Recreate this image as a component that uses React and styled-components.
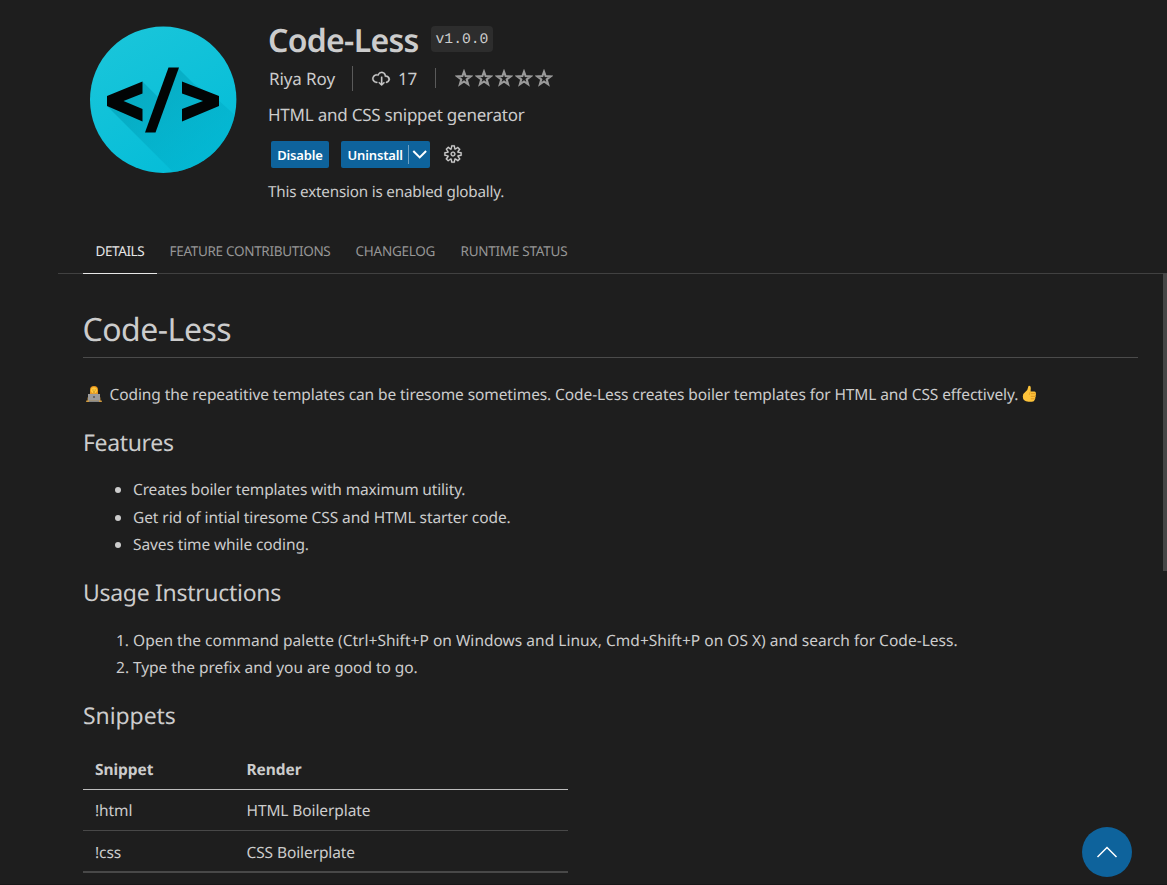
import React from "react";
import styled, { createGlobalStyle } from "styled-components";
import { VscCloudDownload, VscGear } from "react-icons/vsc";

const Global = createGlobalStyle`
  * { box-sizing: border-box; }
  body {
    margin: 0;
    background: #1e1e1e;
    color: #cccccc;
    font-family: "Noto Sans", "Open Sans", sans-serif;
    text-rendering: geometricPrecision;
    overflow: hidden;
  }
`;

const Page = styled.div`
  position: relative;
  height: 885px;
  overflow: hidden;
  white-space: nowrap;
  border-bottom: 1px solid #171717;
`;

const Header = styled.header`
  display: flex;
  gap: 31px;
  height: 229px;
  padding: 20px 0 0 90px;
`;

const Logo = styled.svg`
  display: block;
  width: 147px;
  height: 147px;
  margin-top: 6px;
`;

const Info = styled.div`
  display: flex;
  flex-direction: column;
`;

const TitleRow = styled.div`
  display: flex;
  align-items: center;
  gap: 12px;
  height: 40px;
`;

const Title = styled.h1`
  margin: 0;
  padding-top: 1px;
  width: 151px;
  font-size: 32px;
  line-height: 40px;
  font-weight: 600;
  letter-spacing: -0.7px;
`;

const Version = styled.code`
  height: 26px;
  width: 62px;
  margin-top: -2px;
  border-radius: 4px;
  background: #2d2d2d;
  font: 14.7px/29px "Liberation Mono", monospace;
  text-align: center;
`;

const Meta = styled.div`
  display: flex;
  align-items: center;
  height: 36px;
  font-size: 17px;
  letter-spacing: -0.2px;
`;

const Publisher = styled.span`
  width: 84px;
  padding-left: 1px;
  letter-spacing: -0.1px;
`;

const Separator = styled.i`
  width: 1px;
  height: ${(p) => p.$h}px;
  background: #5a5a5a;
`;

const Installs = styled.span`
  display: flex;
  align-items: center;
  gap: 7px;
  width: 82px;
  padding-left: 18px;

  svg { stroke: #cccccc; stroke-width: 0.25px; }
`;

const Stars = styled.span`
  display: flex;
  gap: 2px;
  padding-left: 19px;
`;

const Description = styled.div`
  font-size: 17px;
  line-height: 38px;
  letter-spacing: -0.23px;
`;

const Actions = styled.div`
  display: flex;
  align-items: center;
  height: 27px;
  margin: 7px 0 0 3px;
`;

const Button = styled.button`
  display: flex;
  align-items: center;
  justify-content: ${(p) => (p.$split ? "flex-start" : "center")};
  width: ${(p) => p.$w}px;
  height: 27px;
  margin-right: 12px;
  padding: 1px 0 0 ${(p) => (p.$split ? 6.5 : 0)}px;
  border: 0;
  border-radius: 2px;
  background: #0e639c;
  color: #fff;
  font: 600 13px/26px "Noto Sans", sans-serif;
  letter-spacing: -0.15px;
`;

const Divider = styled.i`
  width: 1px;
  height: 19px;
  margin: -1px 3px 0 auto;
  background: #6ea1c4;
`;

const Gear = styled(VscGear)`
  margin: -1px 0 0 1px;
  stroke: #cccccc;
  stroke-width: 0.15px;
`;

const Status = styled.div`
  margin-top: 11px;
  font-size: 15.2px;
  line-height: 26px;
  letter-spacing: -0.18px;
`;

const Tabs = styled.nav`
  display: flex;
  height: 45px;
  margin-left: 58px;
  padding-left: 25px;
  border-bottom: 1px solid #414141;
`;

const Tab = styled.a`
  height: 45px;
  width: ${(p) => p.$w}px;
  padding-left: 12.5px;
  border-bottom: 1px solid ${(p) => (p.$active ? "#e7e7e7" : "transparent")};
  color: ${(p) => (p.$active ? "#e7e7e7" : "#969696")};
  font-size: 13.5px;
  line-height: 44px;
  letter-spacing: ${(p) => p.$ls}px;
`;

const Readme = styled.main`
  padding: 30px 29px 0 83px;
  font-size: 15.5px;
`;

const Heading = styled.h1`
  margin: 0 0 22px -0.5px;
  padding-top: 1px;
  height: 54px;
  border-bottom: 1px solid #4b4b4b;
  font-size: 32px;
  font-weight: 400;
  line-height: 50px;
  letter-spacing: -0.5px;
`;

const Intro = styled.p`
  display: flex;
  align-items: center;
  margin: 0;
  height: 28px;
  letter-spacing: -0.095px;
`;

const Emoji = styled.svg`
  width: 18px;
  height: 18px;
  margin: ${(p) => p.$margin};
`;

const Section = styled.h2`
  margin: ${(p) => p.$top}px 0 ${(p) => p.$gap}px;
  font-size: 23px;
  font-weight: 400;
  line-height: 33px;
  letter-spacing: ${(p) => p.$ls}px;
`;

const List = styled.ul`
  margin: 0;
  padding-left: 50px;
  line-height: ${(p) => p.$lh}px;
`;

const Item = styled.li`
  letter-spacing: ${(p) => p.$ls}px;
`;

const Table = styled.table`
  width: 485px;
  border-collapse: collapse;
  border-bottom: 2px solid #484848;
`;

const Cell = styled.td`
  width: ${(p) => p.$w}px;
  height: ${(p) => (p.$last ? 42 : 41)}px;
  padding: ${(p) => (p.$last || p.$head ? 2 : 0)}px 12px 0;
  border-bottom: 1px solid ${(p) => (p.$head ? "#bdbdbd" : "#484848")};
  font-weight: ${(p) => (p.$head ? 700 : 400)};
  text-align: left;
  letter-spacing: ${(p) => (p.$head ? -0.05 : -0.1)}px;
`;

const ScrollThumb = styled.div`
  position: absolute;
  top: 273px;
  right: 0;
  width: 4px;
  height: 298px;
  background: #464646;
`;

const ToTop = styled.button`
  position: absolute;
  right: 35px;
  bottom: 7px;
  display: grid;
  place-items: center;
  width: 50px;
  height: 50px;
  padding: 0;
  border: 0;
  border-radius: 50%;
  background: #0e639c;
`;

const Star = () => (
  <svg width="18" height="18" viewBox="0 0 18 18">
    <path
      d="M9 2.7 L10.6 7.1 L15.6 7.4 L11.7 10.4 L13.1 15.3 L9 12.5 L4.9 15.3 L6.3 10.4 L2.4 7.4 L7.4 7.1 Z"
      fill="none"
      stroke="#999"
      strokeWidth="2.1"
    />
  </svg>
);

const rows = [
  ["!html", "HTML Boilerplate"],
  ["!css", "CSS Boilerplate"],
];

export default function App() {
  return (
    <Page>
      <Global />
      <Header>
        <Logo viewBox="0 0 147 147">
          <defs>
            <linearGradient id="disc" x1="0" y1="0" x2="0.6" y2="1">
              <stop offset="0" stopColor="#1cc6da" />
              <stop offset="1" stopColor="#05bdd8" />
            </linearGradient>
            <linearGradient id="shade" gradientUnits="userSpaceOnUse" x1="45" y1="50" x2="115" y2="130">
              <stop offset="0" stopColor="#0099b0" stopOpacity="0.6" />
              <stop offset="1" stopColor="#00aeca" stopOpacity="0.4" />
            </linearGradient>
            <clipPath id="round">
              <circle cx="73.2" cy="73.7" r="73.2" />
            </clipPath>
          </defs>
          <circle cx="73.2" cy="73.7" r="73.2" fill="url(#disc)" />
          <g clipPath="url(#round)">
            <path
              d="M17 80 L53 56 L68 71 L88 42 L104 58 L126 72 L147 91 V147 H84 Z"
              fill="url(#shade)"
            />
          </g>
          <g fill="#020404">
            <path d="M52.5 55.5 V67.5 L33.5 75 L52.5 83 V95.5 L17 80 V70 Z" />
            <path d="M78.5 41.5 H89 L65.5 106.5 H55 Z" />
            <path d="M92 55.5 V67.5 L113 75 L92 83 V95.5 L129 80 V70 Z" />
          </g>
        </Logo>
        <Info>
          <TitleRow>
            <Title>Code-Less</Title>
            <Version>v1.0.0</Version>
          </TitleRow>
          <Meta>
            <Publisher>Riya Roy</Publisher>
            <Separator $h={25} />
            <Installs>
              <VscCloudDownload size={20} />
              17
            </Installs>
            <Separator $h={20} />
            <Stars>
              {[0, 1, 2, 3, 4].map((n) => (
                <Star key={n} />
              ))}
            </Stars>
          </Meta>
          <Description>HTML and CSS snippet generator</Description>
          <Actions>
            <Button $w={58}>Disable</Button>
            <Button $w={89} $split>
              Uninstall
              <Divider />
              <svg width="18" height="16" viewBox="0 0 18 16">
                <path d="M1.3 4 L7.7 10.4 L14.1 4" fill="none" stroke="#fff" strokeWidth="2" />
              </svg>
            </Button>
            <Gear size={20} />
          </Actions>
          <Status>This extension is enabled globally.</Status>
        </Info>
      </Header>
      <Tabs>
        <Tab $w={74} $ls={-0.4} $active>DETAILS</Tab>
        <Tab $w={186} $ls={-0.31}>FEATURE CONTRIBUTIONS</Tab>
        <Tab $w={105} $ls={-0.25}>CHANGELOG</Tab>
        <Tab $w={132} $ls={-0.25}>RUNTIME STATUS</Tab>
      </Tabs>
      <Readme>
        <Heading>Code-Less</Heading>
        <Intro>
          <Emoji viewBox="0 0 18 18" $margin="0 6.5px 0 2px">
            <path d="M5 9 V5 Q5 1 9 1 Q13 1 13 5 V9 Z" fill="#e8951c" />
            <circle cx="9" cy="5.3" r="3.1" fill="#ffc83d" />
            <path d="M7.5 5 h1 M9.7 5 h1 M8 7 h2" stroke="#9a6510" strokeWidth="0.7" />
            <path d="M2.5 16 Q2.5 8.5 6 8.5 H12 Q15.5 8.5 15.5 16 Z" fill="#d99a35" />
            <path d="M3 9 H15 V16 H3 Z" fill="#9b9b9b" />
            <rect x="1" y="15.5" width="16" height="1.5" rx="0.7" fill="#d09a3e" />
            <rect x="4" y="15.5" width="10" height="1.5" fill="#858585" />
            <circle cx="9" cy="12" r="1" fill="#555" />
          </Emoji>
          Coding the repeatitive templates can be tiresome sometimes. Code-Less creates boiler
          templates for HTML and CSS effectively.
          <Emoji viewBox="0 0 18 18" $margin="0 0 0 3px">
            <path
              d="M7.2 2 Q7.2 0.8 8.3 0.8 Q9.8 0.8 9.8 3 L9.6 6.5 H13.5 Q15 6.6 14.8 8 Q15.3 9 14.7 10.2 Q15 11.5 14.3 12.6 Q14.5 14 13.6 15 Q13.3 16.8 11 16.8 H7.5 Q1.8 16.5 1.8 11.5 Q1.8 8.5 4.5 6.8 Q6.8 5.2 7.2 2 Z"
              fill="#fdc33a"
            />
            <path d="M9.8 8.7 H14.5 M9.8 11.3 H14.3 M9.8 13.8 H13.6" stroke="#d98b1d" strokeWidth="0.8" />
            <path d="M9.5 6.6 Q8 8 8.4 10" fill="none" stroke="#e39a25" strokeWidth="0.7" />
          </Emoji>
        </Intro>
        <Section $top={18} $gap={17} $ls={-0.35}>Features</Section>
        <List $lh={27.5}>
          <Item $ls={-0.16}>Creates boiler templates with maximum utility.</Item>
          <Item $ls={-0.08}>Get rid of intial tiresome CSS and HTML starter code.</Item>
          <Item $ls={-0.1}>Saves time while coding.</Item>
        </List>
        <Section $top={17} $gap={18.5} $ls={-0.3}>Usage Instructions</Section>
        <List as="ol" $lh={27}>
          <Item $ls={0.02}>Open the command palette (Ctrl+Shift+P on Windows and Linux, Cmd+Shift+P on OS X) and search for Code-Less.</Item>
          <Item $ls={-0.05}>Type the prefix and you are good to go.</Item>
        </List>
        <Section $top={18} $gap={16} $ls={-0.08}>Snippets</Section>
        <Table>
          <thead>
            <tr>
              <Cell as="th" $head $w={151.5}>Snippet</Cell>
              <Cell as="th" $head>Render</Cell>
            </tr>
          </thead>
          <tbody>
            {rows.map(([name, text], i) => (
              <tr key={name}>
                <Cell $w={151.5} $last={i === 1}>{name}</Cell>
                <Cell $last={i === 1}>{text}</Cell>
              </tr>
            ))}
          </tbody>
        </Table>
      </Readme>
      <ScrollThumb />
      <ToTop>
        <svg width="22" height="14" viewBox="0 0 22 14">
          <path d="M1.5 12 L11 2.5 L20.5 12" fill="none" stroke="#fff" strokeWidth="1.5" />
        </svg>
      </ToTop>
    </Page>
  );
}
